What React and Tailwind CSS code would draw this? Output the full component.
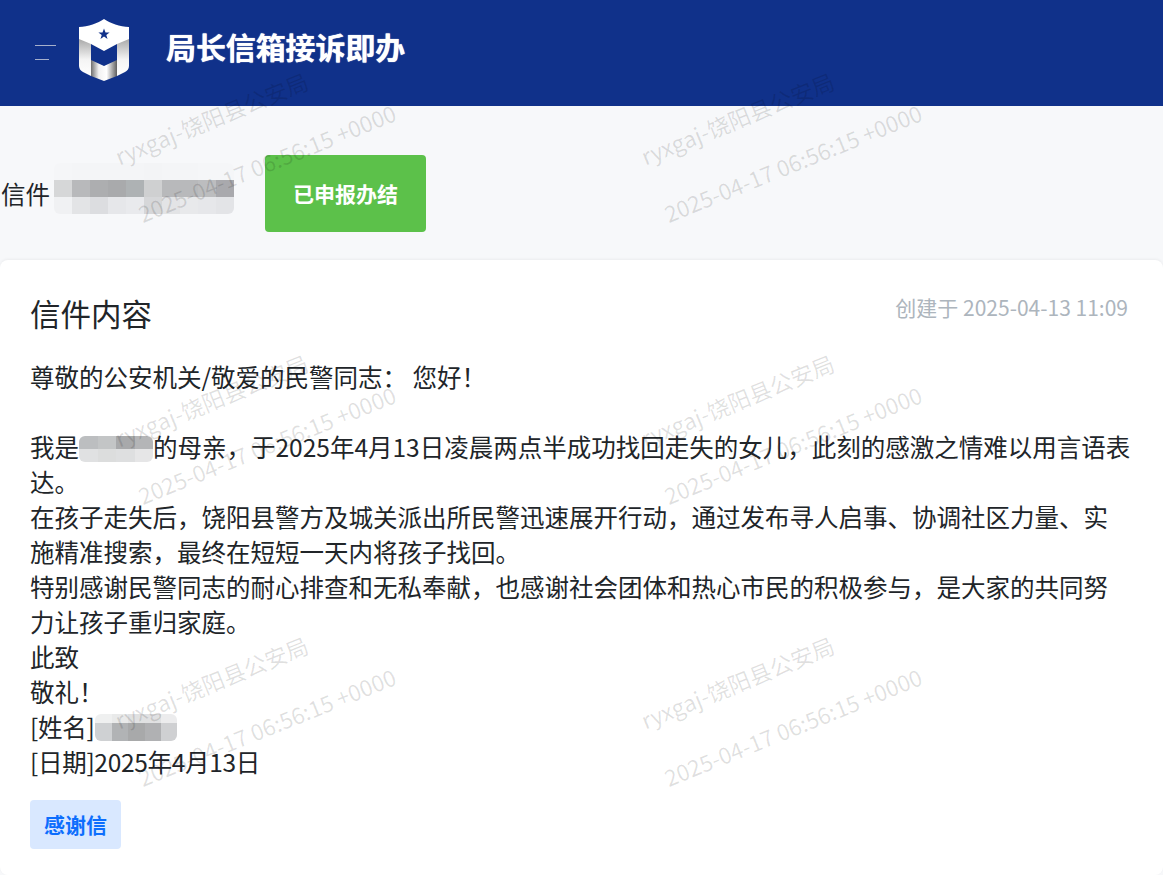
import React from 'react';

const cjk = { fontFamily: '"Noto Sans CJK SC", "Liberation Sans", sans-serif' };

const watermarks = [0, 1, 2, 3, 4, 5];

const nameMosaic = [
  ['#f5f6f8', '#f4f5f7', '#f4f5f7', '#f4f5f7', '#f4f5f7', '#f3f4f6', '#f4f5f7', '#f4f5f7', '#f5f6f8', '#f5f6f8'],
  ['#d6d7d8', '#b8b9bb', '#adaeb0', '#a9aaac', '#aeb2b4', '#cfd0d1', '#b8b9bb', '#b8b9bb', '#bcbdbf', '#a9a9ad'],
  ['#f0f1f3', '#e3e4e6', '#dcdde0', '#e6e7ea', '#e9eaed', '#d6d7d9', '#e3e4e6', '#e8e9eb', '#e6e7ea', '#e3e4e7'],
];

const motherMosaic = [
  ['#bcbec0', '#c3c5c6', '#a8a9ab', '#b4b5b7'],
  ['#e0e1e2', '#dcdddd', '#dedfe0', '#e6e6e7'],
];

const signMosaic = [
  ['#eff0f0', '#e9eaea', '#e0e1e2', '#e0e1e2', '#ececed'],
  ['#cfd1d3', '#b1b3b5', '#a8a9aa', '#b0b1b3', '#cfd0d2'],
  ['#cfd1d3', '#b1b3b5', '#a8a9aa', '#b0b1b3', '#cfd0d2'],
];

function Mosaic({ rows, className }) {
  return (
    <span className={`inline-flex flex-col overflow-hidden rounded-md align-middle ${className}`}>
      {rows.map((row, i) => (
        <span key={i} className="flex flex-1">
          {row.map((color, j) => (
            <span key={j} className="flex-1" style={{ backgroundColor: color }} />
          ))}
        </span>
      ))}
    </span>
  );
}

function Logo() {
  return (
    <svg width="50" height="62" viewBox="0 0 50 62" className="shrink-0">
      <defs>
        <linearGradient id="sideFade" x1="0" y1="0" x2="0" y2="1">
          <stop offset="0" stopColor="#a9a9a9" />
          <stop offset="0.55" stopColor="#f4f4f4" />
          <stop offset="1" stopColor="#ffffff" />
        </linearGradient>
        <linearGradient id="footFade" x1="0" y1="0" x2="1" y2="0">
          <stop offset="0" stopColor="#6f6f6f" />
          <stop offset="0.3" stopColor="#f2f2f2" />
          <stop offset="0.6" stopColor="#ffffff" />
          <stop offset="1" stopColor="#5f5f5f" />
        </linearGradient>
      </defs>
      <path d="M0 20V47C0 50 2 52 4 53L12 57V20Z" fill="url(#sideFade)" />
      <path d="M50 20V47C50 50 48 52 46 53L38 57V20Z" fill="url(#sideFade)" />
      <path d="M12 41L25 47L38 41V57L25 62L12 57Z" fill="url(#footFade)" />
      <path d="M25 0C31 4 41 8 50 8V20L38 25L25 32L12 25L0 20V8C9 8 19 4 25 0Z" fill="#fff" />
      <path d="M25 9.5L26.5 13.4H30.6L27.3 15.9L28.5 20L25 17.6L21.5 20L22.7 15.9L19.4 13.4H23.5Z" fill="#10318a" />
    </svg>
  );
}

export default function App() {
  return (
    <div className="relative h-[875px] overflow-hidden bg-[#f7f8fa] text-[#212529]" style={cjk}>
      {/* Header */}
      <header className="flex h-[106px] items-center bg-[#10318a]">
        <div className="ml-[35px] -mt-[2px] flex w-[44px] flex-col gap-[13px]">
          <span className="h-px w-[21px] bg-[#a6b0cc]" />
          <span className="h-px w-[14px] bg-[#a6b0cc]" />
        </div>
        <div className="-mt-[6px] flex">
          <Logo />
        </div>
        <h1 className="ml-[37px] -mt-[14px] text-[30px] font-bold leading-none tracking-[-0.1px] text-white [text-shadow:0_0_1px_#fff]">局长信箱接诉即办</h1>
      </header>

      {/* Letter title + status */}
      <div className="flex h-[154px] items-center pt-[21px]">
        <span className="ml-[1px] text-[24.5px] leading-[35px]">信件</span>
        <Mosaic rows={nameMosaic} className="ml-[4px] -mt-[10px] h-[51px] w-[180px]" />
        <button className="ml-[31px] flex h-[77px] w-[161px] items-center justify-center rounded-[4px] bg-[#5cc14a] text-[21px] font-bold text-white">
          已申报办结
        </button>
      </div>

      {/* Letter card */}
      <section className="h-[615px] rounded-lg bg-white pl-[30px] pr-[31px] pt-[31px] shadow-[0_-1px_3px_rgba(0,0,0,0.05)]">
        <div className="flex items-center justify-between">
          <h2 className="text-[30.5px] font-normal leading-[45px]">信件内容</h2>
          <span className="-mt-[12px] mr-[4px] text-[21px] text-[#adb5bd]">创建于 2025-04-13 11:09</span>
        </div>
        <div className="mt-[23px] text-[24.5px] leading-[35px]">
          <p>尊敬的公安机关/敬爱的民警同志： 您好！</p>
          <p className="h-[35px]" />
          <p>
            我是<Mosaic rows={motherMosaic} className="h-[26px] w-[74px] -translate-y-[1px]" />的母亲，于2025年4月13日凌晨两点半成功找回走失的女儿，此刻的感激之情难以用言语表达。
          </p>
          <p>在孩子走失后，饶阳县警方及城关派出所民警迅速展开行动，通过发布寻人启事、协调社区力量、实施精准搜索，最终在短短一天内将孩子找回。</p>
          <p>特别感谢民警同志的耐心排查和无私奉献，也感谢社会团体和热心市民的积极参与，是大家的共同努力让孩子重归家庭。</p>
          <p>此致</p>
          <p>敬礼！</p>
          <p className="tracking-[-0.3px]">
            [姓名]<Mosaic rows={signMosaic} className="ml-[1px] h-[27px] w-[82px] -translate-y-[3px]" />
          </p>
          <p className="tracking-[-0.3px]">[日期]2025年4月13日</p>
        </div>
        <span className="mt-[21px] flex h-[49px] w-[91px] items-center justify-center rounded-[4px] bg-[#d9e8ff] text-[21px] font-bold text-[#0d6efd]">
          感谢信
        </span>
      </section>

      {/* Watermark overlay */}
      <div className="pointer-events-none absolute -left-[4px] -top-[9px] grid grid-cols-[526px_526px] auto-rows-[282px]">
        {watermarks.map((i) => (
          <div key={i} className="flex items-center justify-center">
            <div className="flex w-[284px] -rotate-[22deg] flex-col items-start whitespace-nowrap text-[22.5px] leading-[62px] text-black/[0.12]">
              <span>ryxgaj-饶阳县公安局</span>
              <span>2025-04-17 06:56:15 +0000</span>
            </div>
          </div>
        ))}
      </div>
    </div>
  );
}
